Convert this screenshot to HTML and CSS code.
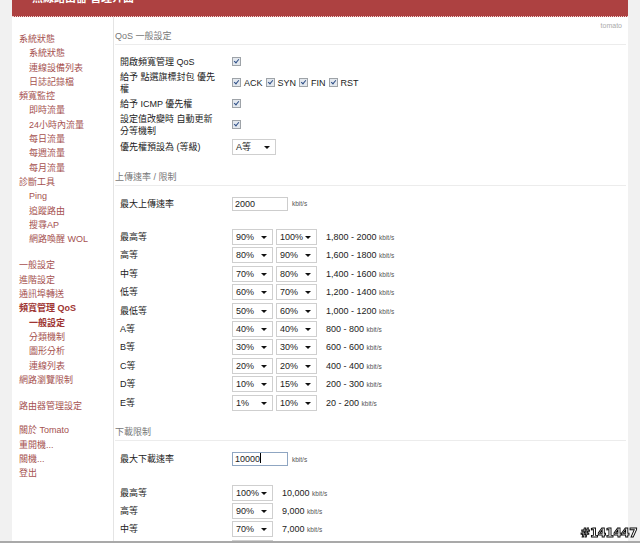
FILE: index.html
```html
<!DOCTYPE html>
<html>

<head>
    <meta charset="utf-8">
    <meta name="viewport" content="width=device-width,initial-scale=1.0">
    <title>頻寬管理 QoS: 一般設定</title>
    <link rel="stylesheet" href="styles.css">
</head>

<body>

    <div class="wrap">
        <div class="header">
            <h1>無線路由器 管理介面</h1>
        </div>

        <div class="layout">
            <div class="sidebar">
                <ul class="menu">
                    <li>系統狀態
                        <ul>
                            <li>系統狀態</li>
                            <li>連線設備列表</li>
                            <li>日誌記錄檔</li>
                        </ul>
                    </li>
                    <li>頻寬監控
                        <ul>
                            <li>即時流量</li>
                            <li>24小時內流量</li>
                            <li>每日流量</li>
                            <li>每週流量</li>
                            <li>每月流量</li>
                        </ul>
                    </li>
                    <li>診斷工具
                        <ul>
                            <li>Ping</li>
                            <li>追蹤路由</li>
                            <li>搜尋AP</li>
                            <li>網路喚醒 WOL</li>
                        </ul>
                    </li>
                    <li class="gap">一般設定</li>
                    <li>進階設定</li>
                    <li>通訊埠轉送</li>
                    <li class="active">頻寬管理 QoS
                        <ul>
                            <li class="active">一般設定</li>
                            <li>分類機制</li>
                            <li>圖形分析</li>
                            <li>連線列表</li>
                        </ul>
                    </li>
                    <li>網路瀏覽限制</li>
                    <li class="gap">路由器管理設定</li>
                    <li class="gap small">關於 Tomato</li>
                    <li>重開機...</li>
                    <li>關機...</li>
                    <li>登出</li>
                </ul>
            </div>

            <div class="main">
                <div class="brand">tomato</div>

                <div class="section-title">QoS 一般設定</div>
                <div class="form first">
                    <div class="row">
                        <div class="label">開啟頻寬管理 QoS</div>
                        <div class="field"><span class="cb"></span></div>
                    </div>
                    <div class="row">
                        <div class="label">給予 點選旗標封包 優先權</div>
                        <div class="field">
                            <span class="cb"></span><span class="cb-text">ACK</span>
                            <span class="cb"></span><span class="cb-text">SYN</span>
                            <span class="cb"></span><span class="cb-text">FIN</span>
                            <span class="cb"></span><span class="cb-text">RST</span>
                        </div>
                    </div>
                    <div class="row">
                        <div class="label">給予 ICMP 優先權</div>
                        <div class="field"><span class="cb"></span></div>
                    </div>
                    <div class="row">
                        <div class="label">設定值改變時 自動更新分等機制</div>
                        <div class="field"><span class="cb"></span></div>
                    </div>
                    <div class="row tall">
                        <div class="label">優先權預設為 (等級)</div>
                        <div class="field"><span class="sel wide">A等</span></div>
                    </div>
                </div>

                <div class="section-title spaced">上傳速率 / 限制</div>
                <div class="form">
                    <div class="row tall">
                        <div class="label">最大上傳速率</div>
                        <div class="field"><span class="input">2000</span><span class="unit">kbit/s</span></div>
                    </div>
                    <div class="spacer"></div>
                    <div class="row rate">
                        <div class="label">最高等</div>
                        <div class="field"><span class="sel">90%</span><span class="sel">100%</span><span class="range">1,800 - 2000 <small>kbit/s</small></span></div>
                    </div>
                    <div class="row rate">
                        <div class="label">高等</div>
                        <div class="field"><span class="sel">80%</span><span class="sel">90%</span><span class="range">1,600 - 1800 <small>kbit/s</small></span></div>
                    </div>
                    <div class="row rate">
                        <div class="label">中等</div>
                        <div class="field"><span class="sel">70%</span><span class="sel">80%</span><span class="range">1,400 - 1600 <small>kbit/s</small></span></div>
                    </div>
                    <div class="row rate">
                        <div class="label">低等</div>
                        <div class="field"><span class="sel">60%</span><span class="sel">70%</span><span class="range">1,200 - 1400 <small>kbit/s</small></span></div>
                    </div>
                    <div class="row rate">
                        <div class="label">最低等</div>
                        <div class="field"><span class="sel">50%</span><span class="sel">60%</span><span class="range">1,000 - 1200 <small>kbit/s</small></span></div>
                    </div>
                    <div class="row rate">
                        <div class="label">A等</div>
                        <div class="field"><span class="sel">40%</span><span class="sel">40%</span><span class="range">800 - 800 <small>kbit/s</small></span></div>
                    </div>
                    <div class="row rate">
                        <div class="label">B等</div>
                        <div class="field"><span class="sel">30%</span><span class="sel">30%</span><span class="range">600 - 600 <small>kbit/s</small></span></div>
                    </div>
                    <div class="row rate">
                        <div class="label">C等</div>
                        <div class="field"><span class="sel">20%</span><span class="sel">20%</span><span class="range">400 - 400 <small>kbit/s</small></span></div>
                    </div>
                    <div class="row rate">
                        <div class="label">D等</div>
                        <div class="field"><span class="sel">10%</span><span class="sel">15%</span><span class="range">200 - 300 <small>kbit/s</small></span></div>
                    </div>
                    <div class="row rate">
                        <div class="label">E等</div>
                        <div class="field"><span class="sel">1%</span><span class="sel">10%</span><span class="range">20 - 200 <small>kbit/s</small></span></div>
                    </div>
                </div>

                <div class="section-title spaced">下載限制</div>
                <div class="form">
                    <div class="row tall">
                        <div class="label">最大下載速率</div>
                        <div class="field"><span class="input focus">10000<i class="caret"></i></span><span class="unit">kbit/s</span></div>
                    </div>
                    <div class="spacer"></div>
                    <div class="row rate">
                        <div class="label">最高等</div>
                        <div class="field"><span class="sel">100%</span><span class="range">10,000 <small>kbit/s</small></span></div>
                    </div>
                    <div class="row rate">
                        <div class="label">高等</div>
                        <div class="field"><span class="sel">90%</span><span class="range">9,000 <small>kbit/s</small></span></div>
                    </div>
                    <div class="row rate">
                        <div class="label">中等</div>
                        <div class="field"><span class="sel">70%</span><span class="range">7,000 <small>kbit/s</small></span></div>
                    </div>
                    <div class="row rate last">
                        <div class="field"><span class="sel"></span></div>
                    </div>
                </div>
            </div>
        </div>
    </div>

    <div class="frame-edge"></div>
    <div class="stamp">#141447</div>

</body>

</html>
```

FILE: styles.css
```css
body {
    margin: 0;
    background-color: #f1f1f1;
    font-family: "Liberation Sans", "Noto Sans CJK TC", sans-serif;
    font-size: 9px;
    color: #222;
    overflow: hidden;
}

.wrap {
    margin-left: 12px;
    width: 616px;
    min-height: 543px;
    background-color: #fff;
}

.header {
    height: 16px;
    background-color: #ad4141;
    border-bottom: 1px dotted #f0d0d0;
    overflow: hidden;
}

.header h1 {
    margin: -10px 0 0 20px;
    font-size: 11px;
    line-height: 16px;
    color: #fff;
    font-weight: bold;
}

.layout {
    display: flex;
}

/* left menu */

.sidebar {
    box-sizing: border-box;
    width: 102px;
    min-height: 526px;
    padding: 15px 0 0 7px;
    border-right: 1px solid #e4e4e4;
}

.menu,
.menu ul {
    list-style: none;
    margin: 0;
    padding: 0;
}

.menu li {
    line-height: 14.3px;
    color: #a5514f;
    white-space: nowrap;
}

.menu ul li {
    padding-left: 10px;
}

.menu li.active {
    font-weight: bold;
    color: #9e3533;
}

.menu li.active li {
    font-weight: normal;
    color: #a5514f;
}

.menu li.active li.active {
    font-weight: bold;
    color: #9e3533;
}

.menu li.gap {
    margin-top: 12px;
}

.menu li.gap.small {
    margin-top: 10px;
}

/* content */

.main {
    flex: 1;
    padding: 0 2px 0 1px;
}

.brand {
    text-align: right;
    font-size: 7px;
    line-height: 8px;
    padding: 5px 4px 0 0;
    color: #aaa;
}

.section-title {
    line-height: 13px;
    padding-bottom: 1px;
    border-bottom: 1px solid #ececec;
    color: #777;
}

.section-title.spaced {
    margin-top: 14.5px;
}

.form {
    padding-left: 5px;
    margin-top: 9px;
}

.row {
    display: flex;
    align-items: center;
    min-height: 15px;
    padding: 1.5px 0;
    box-sizing: border-box;
}

.row.tall {
    height: 18px;
    padding: 0;
}

.row.rate {
    height: 18.4px;
    padding: 0;
}

.row.last {
    padding-left: 112px;
}

.label {
    box-sizing: border-box;
    width: 112px;
    padding-right: 15px;
    line-height: 12px;
    flex-shrink: 0;
}

.field {
    display: flex;
    align-items: center;
}

.spacer {
    height: 15.3px;
}

.cb {
    display: inline-block;
    width: 9px;
    height: 9px;
    box-sizing: border-box;
    border: 1px solid #9ea3a8;
    background-color: #e3e8ee;
    position: relative;
}

.cb::after {
    content: "";
    position: absolute;
    left: 2px;
    top: 0px;
    width: 2px;
    height: 4px;
    border-right: 1.2px solid #2f4f88;
    border-bottom: 1.2px solid #2f4f88;
    transform: rotate(40deg);
}

.cb-text {
    margin: 0 3px 0 3px;
}

.sel {
    position: relative;
    display: inline-block;
    box-sizing: border-box;
    width: 41px;
    height: 16px;
    line-height: 14px;
    padding-left: 3px;
    border: 1px solid #cfcfcf;
    background-color: #fff;
    margin-right: 3px;
}

.sel.wide {
    width: 44px;
}

.sel::after {
    content: "";
    position: absolute;
    right: 5px;
    top: 6px;
    border-left: 3px solid transparent;
    border-right: 3px solid transparent;
    border-top: 3px solid #111;
}

.input {
    display: inline-block;
    box-sizing: border-box;
    width: 56px;
    height: 14px;
    line-height: 12px;
    padding-left: 2px;
    border: 1px solid #cdcdcd;
}

.input.focus {
    border-color: #8fa6c2;
}

.caret {
    display: inline-block;
    width: 1px;
    height: 10px;
    background-color: #000;
    vertical-align: -1px;
}

.unit,
.range small {
    font-size: 6.5px;
    color: #555;
}

.unit {
    margin-left: 4px;
}

.range {
    margin-left: 6px;
}

.frame-edge {
    position: fixed;
    left: 0;
    right: 0;
    bottom: 0;
    height: 2px;
    background-color: #a9a9a9;
}

.stamp {
    position: fixed;
    right: 3px;
    bottom: 3px;
    font-family: "DejaVu Sans", sans-serif;
    font-size: 12px;
    font-weight: bold;
    letter-spacing: -0.5px;
    color: #fff;
    -webkit-text-stroke: 0.9px #000;
}
```
